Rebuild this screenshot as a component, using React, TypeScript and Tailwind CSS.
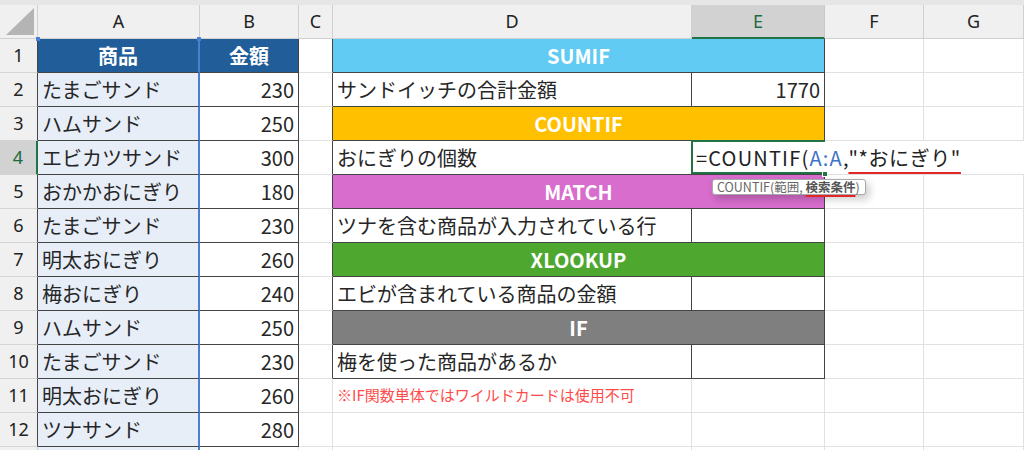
import React from "react";

const items: [string, number][] = [
  ["たまごサンド", 230],
  ["ハムサンド", 250],
  ["エビカツサンド", 300],
  ["おかかおにぎり", 180],
  ["たまごサンド", 230],
  ["明太おにぎり", 260],
  ["梅おにぎり", 240],
  ["ハムサンド", 250],
  ["たまごサンド", 230],
  ["明太おにぎり", 260],
  ["ツナサンド", 280],
];

type Block =
  | { kind: "head"; label: string; bg: string }
  | { kind: "row"; label: string; value?: string };

const blocks: Block[] = [
  { kind: "head", label: "SUMIF", bg: "bg-[#61cbf3]" },
  { kind: "row", label: "サンドイッチの合計金額", value: "1770" },
  { kind: "head", label: "COUNTIF", bg: "bg-[#ffc000]" },
  { kind: "row", label: "おにぎりの個数" },
  { kind: "head", label: "MATCH", bg: "bg-[#d86dcd]" },
  { kind: "row", label: "ツナを含む商品が入力されている行" },
  { kind: "head", label: "XLOOKUP", bg: "bg-[#4ea72e]" },
  { kind: "row", label: "エビが含まれている商品の金額" },
  { kind: "head", label: "IF", bg: "bg-[#7f7f7f]" },
  { kind: "row", label: "梅を使った商品があるか" },
];

const light = "border-r border-b border-[#e1e1e1]";
const dark = "border-r border-b border-[#444]";

function Cell({
  w,
  b = light,
  className = "",
  children,
}: {
  w: string;
  b?: string;
  className?: string;
  children?: React.ReactNode;
}) {
  return (
    <div className={`${w} ${b} ${className} h-full shrink-0 box-border flex items-center`}>
      {children}
    </div>
  );
}

function ColHead({ w, label, active }: { w: string; label: string; active?: boolean }) {
  return (
    <div
      className={`${w} h-full shrink-0 box-border flex items-center justify-center border-r text-[18px] ${
        active
          ? "bg-[#d2d2d2] text-[#1e6b41] border-r-[#c8c8c8] border-b-2 border-b-[#217346]"
          : "bg-[#f0f0f0] text-[#222] border-b border-[#d0d0d0]"
      }`}
    >
      {label}
    </div>
  );
}

function RowHead({ n }: { n: number }) {
  const active = n === 4;
  const edge = n <= 12 ? "border-r-[#444]" : "border-r-[#d0d0d0]";
  return (
    <div
      className={`w-[38px] h-full shrink-0 box-border flex items-center justify-center border-b border-b-[#d4d4d4] text-[18px] font-['Noto_Sans',sans-serif] ${
        active ? "bg-[#d2d2d2] text-[#1e6b41] border-r-2 border-r-[#217346]" : `bg-[#f0f0f0] text-[#222] border-r ${edge}`
      }`}
    >
      {n <= 12 ? n : null}
    </div>
  );
}

function Formula() {
  return (
    <>
      <div className="absolute -left-px -top-px right-0 bottom-0 border-2 border-r-0 border-[#217346]" />
      <div className="absolute -right-[3px] -bottom-[3px] w-[6px] h-[6px] bg-[#217346] border border-white z-10" />
      <span className="relative z-10 whitespace-nowrap pl-[4px] text-[20px] text-[#222]">
        <span className="tracking-[1.2px]">=COUNTIF(</span>
        <span className="text-[#3f73c6] tracking-[1.2px]">A:A</span>,
        <span className="underline decoration-[#e32626] decoration-2 underline-offset-[6px] tracking-[0.6px]">"*おにぎり"</span>
      </span>
      <div className="absolute left-[20px] top-[38px] z-20 w-[154px] h-[16px] box-border px-[4px] bg-white border border-[#a8a8a8] rounded-[3px] shadow-[3px_4px_8px_rgba(0,0,0,0.22)] flex items-center whitespace-nowrap text-[12.5px] leading-none text-[#666]">
        COUNTIF(範囲,&nbsp;
        <span className="font-bold text-[#555] underline decoration-[#e32626] decoration-2 underline-offset-[3px]">
          検索条件
        </span>
        )
      </div>
    </>
  );
}

function RightPart({ n }: { n: number }) {
  const block = blocks[n - 1];
  if (block && block.kind === "head") {
    return (
      <>
        <Cell w="w-[492px]" b={dark} className={`${block.bg} justify-center text-white font-bold text-[20px]`}>
          {block.label}
        </Cell>
        <Cell w="w-[99px]" />
        <Cell w="w-[100px]" />
      </>
    );
  }
  if (block && block.kind === "row") {
    return (
      <>
        <Cell w="w-[359px]" b={dark} className="pl-[4px] text-[20px] text-[#262626] whitespace-nowrap">
          {block.label}
        </Cell>
        <Cell
          w="w-[133px]"
          b={n === 4 ? "border-b border-[#444]" : dark}
          className={`relative text-[20px] text-[#262626] ${n === 4 ? "justify-start" : "justify-end pr-[4px]"}`}
        >
          {n === 4 ? <Formula /> : block.value}
        </Cell>
        <Cell w="w-[99px]" b={n === 4 ? "border-b border-[#e1e1e1]" : light} />
        <Cell w="w-[100px]" b={n === 4 ? "border-b border-[#e1e1e1]" : light} />
      </>
    );
  }
  return (
    <>
      <Cell w="w-[359px]" className="pl-[4px] text-[15px] text-[#ff4b4b] whitespace-nowrap">
        {n === 11 ? "※IF関数単体ではワイルドカードは使用不可" : null}
      </Cell>
      <Cell w="w-[133px]" />
      <Cell w="w-[99px]" />
      <Cell w="w-[100px]" />
    </>
  );
}

function Row({ n }: { n: number }) {
  const item = n >= 2 ? items[n - 2] : undefined;
  const inTable = n <= 12;
  return (
    <div className="flex h-[34px] shrink-0">
      <RowHead n={n} />
      {n === 1 ? (
        <>
          <Cell
            w="w-[162px]"
            b="border-r-2 border-r-[#4a80d4] border-b border-b-[#444]"
            className="relative bg-[#215d99] justify-center text-white font-bold text-[20px]"
          >
            <div className="absolute -left-[2px] -top-[2px] w-[4px] h-[4px] bg-[#4a80d4]" />
            <div className="absolute -right-[3px] -top-[2px] w-[4px] h-[4px] bg-[#4a80d4]" />
            商品
          </Cell>
          <Cell w="w-[99px]" b={dark} className="bg-[#215d99] justify-center text-white font-bold text-[20px]">
            金額
          </Cell>
        </>
      ) : inTable && item ? (
        <>
          <Cell
            w="w-[162px]"
            b="border-r-2 border-r-[#4a80d4] border-b border-b-[#444]"
            className="bg-[#e7eef8] pl-[4px] text-[20px] text-[#262626] whitespace-nowrap"
          >
            {item[0]}
          </Cell>
          <Cell w="w-[99px]" b={dark} className="justify-end pr-[4px] text-[20px] text-[#262626]">
            {item[1]}
          </Cell>
        </>
      ) : (
        <>
          <Cell w="w-[162px]" b="border-r-2 border-r-[#4a80d4] border-b border-b-[#e1e1e1]" className="bg-[#e7eef8]" />
          <Cell w="w-[99px]" />
        </>
      )}
      <Cell w="w-[34px]" b={n <= 10 ? "border-r border-b border-r-[#444] border-b-[#e1e1e1]" : light} />
      <RightPart n={n} />
    </div>
  );
}

export default function App() {
  return (
    <div className="w-[1024px] h-[450px] overflow-hidden bg-white font-['Noto_Sans_CJK_JP','Noto_Sans',sans-serif] flex flex-col">
      <div className="h-[5px] shrink-0 bg-[#e6e6e6]" />
      <div className="flex h-[34px] shrink-0 font-['Noto_Sans',sans-serif]">
        <div className="w-[38px] h-full shrink-0 box-border bg-[#f0f0f0] border-r border-b border-[#d0d0d0] flex items-end justify-end pr-[3px] pb-[3px]">
          <svg width="28" height="27" viewBox="0 0 28 27">
            <polygon points="0,27 28,27 28,0" fill="#b4b4b4" />
          </svg>
        </div>
        <ColHead w="w-[162px]" label="A" />
        <ColHead w="w-[99px]" label="B" />
        <ColHead w="w-[34px]" label="C" />
        <ColHead w="w-[359px]" label="D" />
        <ColHead w="w-[133px]" label="E" active />
        <ColHead w="w-[99px]" label="F" />
        <ColHead w="w-[100px]" label="G" />
      </div>
      {Array.from({ length: 13 }, (_, i) => (
        <Row key={i + 1} n={i + 1} />
      ))}
    </div>
  );
}
